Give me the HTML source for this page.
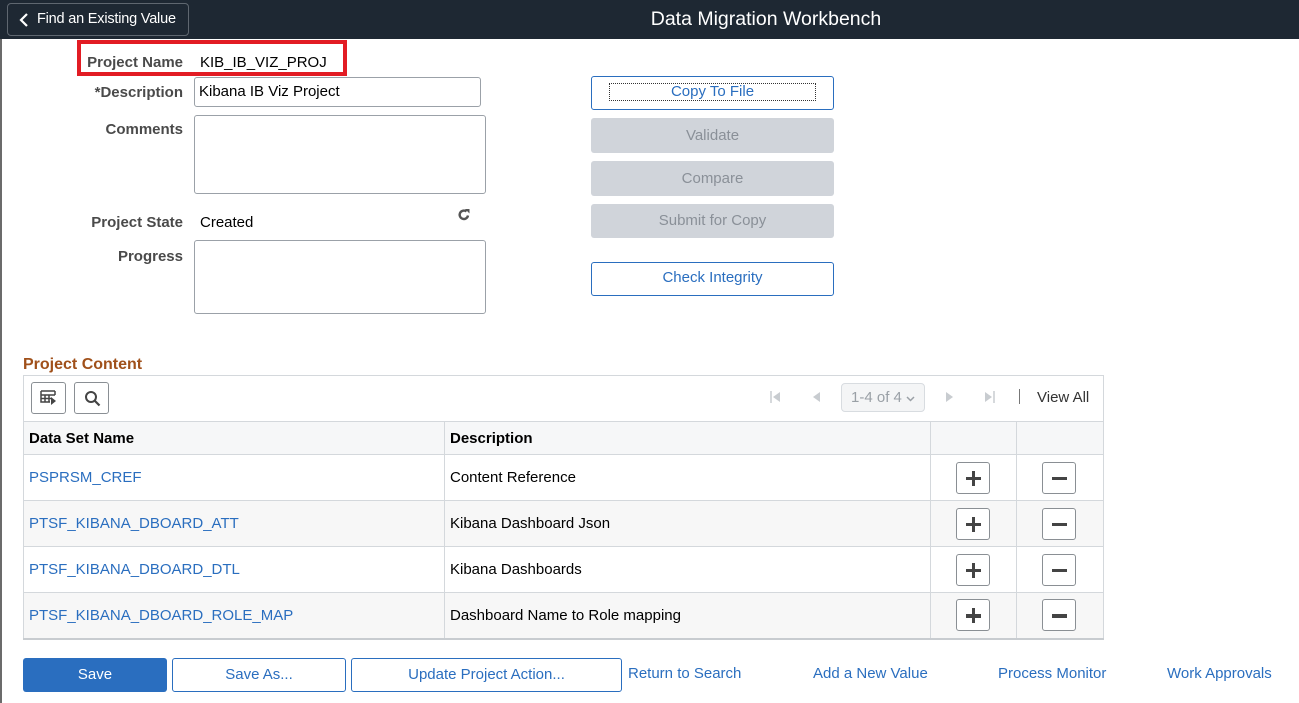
<!DOCTYPE html>
<html><head><meta charset="utf-8"><style>
*{box-sizing:border-box;margin:0;padding:0}
body{width:1299px;height:703px;overflow:hidden;background:#fff;font-family:"Liberation Sans",Arial,sans-serif;font-size:15px;color:#000;position:relative}
.a{position:absolute}
.hdr{left:0;top:0;width:1299px;height:39px;background:#1e2833}
.back{left:7px;top:3px;width:182px;height:33px;border:1px solid #5f6770;border-radius:4px;color:#fff;font-size:14.5px;line-height:31px;padding-left:29px;letter-spacing:-0.2px}
.title{left:566px;top:8px;width:400px;text-align:center;color:#fff;font-size:19.5px}
.lbl{font-weight:bold;color:#4a4a4a;text-align:right;width:183px;left:0}
.inp{border:1px solid #9ba1a8;border-radius:3px;background:#fff}
.btn{border:1px solid #2a6ebf;border-radius:3px;color:#2a6ebf;text-align:center;background:#fff}
.dis{background:#d0d4da;border-radius:3px;color:#8a9098;text-align:center}
.lnk{color:#2a6ebf}
table{border-collapse:collapse}
td{border:1px solid #d4d8dc;padding-left:5px}
tr.r td{height:46px}
tr.h td{height:33px}
.ib{width:34px;height:32px;border:1px solid #8a8f94;border-radius:3px;background:#fff;position:relative;font-size:0;margin-left:20px}
.ib::before{content:"";position:absolute;left:9px;top:14px;width:15px;height:3.5px;background:#444}
td:nth-child(3) .ib::after{content:"";position:absolute;left:14.75px;top:8px;width:3.5px;height:15px;background:#444}
</style></head><body>
<div class="a" style="left:0;top:39px;width:2px;height:664px;background:#6b6b6b"></div>
<div class="a hdr"></div>
<div class="a back"><svg class="a" style="left:11px;top:9px" width="10" height="14" viewBox="0 0 10 14"><path d="M8 1L2 7l6 6" stroke="#fff" stroke-width="2.2" fill="none"/></svg>Find an Existing Value</div>
<div class="a title">Data Migration Workbench</div>

<div class="a" style="left:77px;top:40px;width:270px;height:36px;border:4px solid #e21c24"></div>
<div class="a lbl" style="top:54px">Project Name</div>
<div class="a" style="left:200px;top:54px">KIB_IB_VIZ_PROJ</div>
<div class="a lbl" style="top:84px">*Description</div>
<div class="a inp" style="left:194px;top:77px;width:287px;height:30px;padding:5px 4px">Kibana IB Viz Project</div>
<div class="a lbl" style="top:121px">Comments</div>
<div class="a inp" style="left:194px;top:115px;width:292px;height:79px"></div>
<div class="a lbl" style="top:214px">Project State</div>
<div class="a" style="left:200px;top:214px">Created</div>
<svg class="a" style="left:457px;top:208px" width="14" height="14" viewBox="0 0 14 14"><path d="M11 7.5A4.2 4.2 0 1 1 9.5 3.5" stroke="#555" stroke-width="2.4" fill="none"/><path d="M8 1h4.5v4.5z" fill="#555"/></svg>
<div class="a lbl" style="top:248px">Progress</div>
<div class="a inp" style="left:194px;top:240px;width:292px;height:74px"></div>

<div class="a btn" style="left:591px;top:76px;width:243px;height:34px;padding-top:7px"><div style="margin:0 17px;border:1px dotted #333;height:18px;line-height:16px;margin-top:-1px">Copy To File</div></div>
<div class="a dis" style="left:591px;top:118px;width:243px;height:35px;line-height:35px">Validate</div>
<div class="a dis" style="left:591px;top:161px;width:243px;height:35px;line-height:35px">Compare</div>
<div class="a dis" style="left:591px;top:204px;width:243px;height:34px;line-height:34px">Submit for Copy</div>
<div class="a btn" style="left:591px;top:262px;width:243px;height:34px;line-height:30px">Check Integrity</div>

<div class="a" style="left:23px;top:356px;font-weight:bold;color:#a0501a;font-size:16px">Project Content</div>
<div class="a" style="left:23px;top:375px;width:1081px;height:47px;border:1px solid #d4d8dc;border-bottom:none"></div>
<div class="a inp" style="left:31px;top:382px;width:35px;height:32px;border-color:#8a8f94"><svg style="margin:7px 8px" width="18" height="17" viewBox="0 0 18 17"><path d="M1 1h14M1 1v11h9M1 5h14M1 8.5h10M5 5v7M9 5v7M15 1v4" stroke="#444" stroke-width="1.5" fill="none"/><path d="M11 7l5 4-5 4z" fill="#444"/></svg></div>
<div class="a inp" style="left:74px;top:382px;width:35px;height:32px;border-color:#8a8f94"><svg style="margin:7px 9px" width="17" height="17" viewBox="0 0 17 17"><circle cx="7" cy="7" r="5" stroke="#444" stroke-width="2" fill="none"/><path d="M10.5 10.5l5 5" stroke="#444" stroke-width="2.2"/></svg></div>
<svg class="a" style="left:770px;top:391px" width="12" height="12"><path d="M1 0v12" stroke="#c8ccd0" stroke-width="1.5"/><path d="M10 1v10L3 6z" fill="#c8ccd0"/></svg>
<svg class="a" style="left:812px;top:391px" width="10" height="12"><path d="M8 1v10L1 6z" fill="#c8ccd0"/></svg>
<div class="a" style="left:841px;top:383px;width:84px;height:29px;border:1px solid #d8dce0;border-radius:4px;background:#f4f5f6;color:#9aa0a6;line-height:27px;padding-left:9px">1-4 of 4 <svg width="9" height="6" viewBox="0 0 9 6"><path d="M1 1l3.5 3.5L8 1" stroke="#9aa0a6" stroke-width="1.5" fill="none"/></svg></div>
<svg class="a" style="left:944px;top:391px" width="10" height="12"><path d="M2 1v10l7-5z" fill="#c8ccd0"/></svg>
<svg class="a" style="left:984px;top:391px" width="12" height="12"><path d="M1 1v10l7-5z" fill="#c8ccd0"/><path d="M10 0v12" stroke="#c8ccd0" stroke-width="1.5"/></svg>
<div class="a" style="left:1019px;top:389px;width:1px;height:15px;background:#777"></div>
<div class="a" style="left:1037px;top:389px;color:#333">View All</div>

<table class="a" style="left:23px;top:421px;width:1081px">
<tr class="h" style="background:#f6f7f8;font-weight:bold"><td style="width:421px">Data Set Name</td><td style="width:486px">Description</td><td style="width:86px"></td><td></td></tr>
<tr class="r"><td class="lnk">PSPRSM_CREF</td><td>Content Reference</td><td><div class="ib">+</div></td><td><div class="ib">−</div></td></tr>
<tr class="r" style="background:#f7f7f7"><td class="lnk">PTSF_KIBANA_DBOARD_ATT</td><td>Kibana Dashboard Json</td><td><div class="ib">+</div></td><td><div class="ib">−</div></td></tr>
<tr class="r"><td class="lnk">PTSF_KIBANA_DBOARD_DTL</td><td>Kibana Dashboards</td><td><div class="ib">+</div></td><td><div class="ib">−</div></td></tr>
<tr class="r" style="background:#f7f7f7"><td class="lnk" style="border-bottom:2px solid #c8ccd0">PTSF_KIBANA_DBOARD_ROLE_MAP</td><td style="border-bottom:2px solid #c8ccd0">Dashboard Name to Role mapping</td><td style="border-bottom:2px solid #c8ccd0"><div class="ib">+</div></td><td style="border-bottom:2px solid #c8ccd0"><div class="ib">−</div></td></tr>
</table>

<div class="a" style="left:23px;top:658px;width:144px;height:34px;background:#2a6ebf;border-radius:3px;color:#fff;text-align:center;line-height:34px">Save</div>
<div class="a btn" style="left:172px;top:658px;width:174px;height:34px;line-height:32px">Save As...</div>
<div class="a btn" style="left:351px;top:658px;width:271px;height:34px;line-height:32px">Update Project Action...</div>
<div class="a lnk" style="left:628px;top:665px">Return to Search</div>
<div class="a lnk" style="left:813px;top:665px">Add a New Value</div>
<div class="a lnk" style="left:998px;top:665px">Process Monitor</div>
<div class="a lnk" style="left:1167px;top:665px">Work Approvals</div>
</body></html>
